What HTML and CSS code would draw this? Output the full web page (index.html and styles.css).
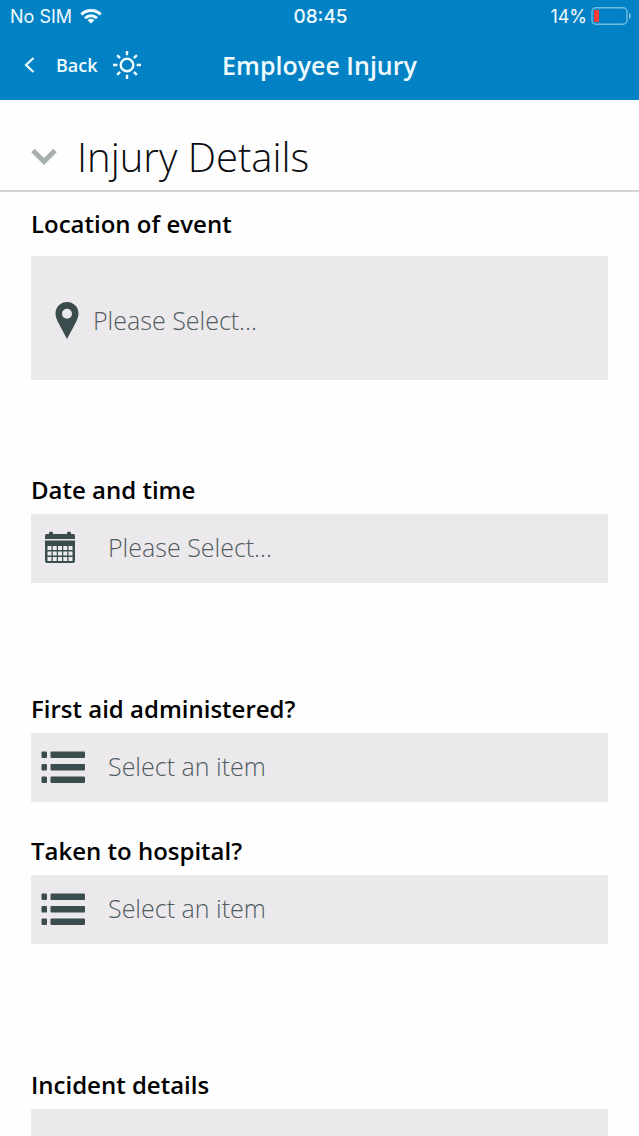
FILE: index.html
```html
<!DOCTYPE html>
<html lang="en">
<head>
<meta charset="utf-8">
<meta name="viewport" content="width=device-width, initial-scale=1">
<title>Employee Injury</title>
<link rel="stylesheet" href="styles.css">
</head>
<body>
<div class="page">
  <header class="top">
    <div class="status">
      <div class="status-left">
        <span>No SIM</span>
        <svg class="wifi" width="22" height="16" viewBox="0 0 22 16" fill="none" stroke="currentColor" stroke-width="3" aria-hidden="true">
          <path d="M1.3 6.4a13.8 13.8 0 0 1 19.4 0"/>
          <path d="M5 10.2a8.5 8.5 0 0 1 12 0"/>
          <path d="M11 15.4 7.6 12.2a4.8 4.8 0 0 1 6.8 0z" fill="currentColor" stroke="none"/>
        </svg>
      </div>
      <time class="clock">08:45</time>
      <div class="status-right">
        <span>14%</span>
        <svg width="40" height="18" viewBox="0 0 40 18" aria-hidden="true">
          <rect x="1" y=".8" width="35" height="16.4" rx="4" fill="none" stroke="#6fbce3" stroke-width="1.4"/>
          <rect x="3" y="3" width="5" height="12" rx="1" fill="#fb3b34"/>
          <path d="M38 6c2.2 1 2.2 5 0 6z" fill="#8accec"/>
        </svg>
      </div>
    </div>
    <nav class="nav">
      <div class="nav-left">
        <button class="back" type="button">
          <svg width="12" height="18" viewBox="0 0 12 18" fill="none" stroke="currentColor" stroke-width="2.2" aria-hidden="true"><path d="M9.500 2 2 9l7.500 7"/></svg>
          <span>Back</span>
        </button>
        <button class="sun" type="button" aria-label="Brightness">
          <svg width="30" height="30" viewBox="0 0 30 30" fill="none" stroke="currentColor" stroke-width="2.4" aria-hidden="true">
            <circle cx="15" cy="15" r="6.3"/>
            <path d="M15 1v4.2M15 24.800v4.200M1 15h4.400M24.600 15H29M5.100 5.100l3 3M21.900 21.900l3 3M5.100 24.900l3-3M21.900 8.100l3-3"/>
          </svg>
        </button>
      </div>
      <h1 class="title">Employee Injury</h1>
    </nav>
  </header>

  <main class="content">
    <button class="section" type="button" aria-expanded="true">
      <svg width="26" height="18" viewBox="0 0 26 18" fill="none" stroke="#a7b0b0" stroke-width="5" aria-hidden="true"><path d="M2 2.500l11 11 11-11"/></svg>
      <span>Injury Details</span>
    </button>

    <form class="form">
      <div class="field field-location">
        <label class="label" for="location">Location of event</label>
        <button class="box box-tall" id="location" type="button">
          <svg width="24" height="38" viewBox="0 0 24 38" aria-hidden="true"><path fill="#3b4c4e" fill-rule="evenodd" d="M12 1a11.500 11.500 0 0 0-11.500 11.500c0 3 .9 5 2.200 7.900L12 38l9.300-17.600c1.300-2.900 2.200-4.900 2.200-7.900A11.500 11.500 0 0 0 12 1zm0 6.800a5 5 0 1 1 0 10 5 5 0 0 1 0-10z"/></svg>
          <span>Please Select...</span>
        </button>
      </div>

      <div class="field field-date">
        <label class="label" for="date">Date and time</label>
        <button class="box" id="date" type="button">
          <svg class="calendar" width="32" height="32" viewBox="0 0 32 32" aria-hidden="true">
            <path fill="#3b4c4e" d="M1 4.500Q1 3 2.500 3H5V2q0-1.500 2-1.500T9 2v1h14V2q0-1.500 2-1.500T27 2v1h2.500Q31 3 31 4.500V8H1zM1 9.500h30V30q0 2-2 2H3q-2 0-2-2z"/>
            <path fill="#ecebed" d="M3.500 15h4v4h-4zm5.250 0h4v4h-4zm5.250 0h4v4h-4zm5.250 0h4v4h-4zm5.250 0h4v4h-4zM3.500 20.500h4v4h-4zm5.250 0h4v4h-4zm5.250 0h4v4h-4zm5.250 0h4v4h-4zm5.250 0h4v4h-4zM3.500 26h4v4h-4zm5.250 0h4v4h-4zm5.250 0h4v4h-4zm5.250 0h4v4h-4zm5.250 0h4v4h-4z"/>
          </svg>
          <span>Please Select...</span>
        </button>
      </div>

      <div class="field field-aid">
        <label class="label" for="aid">First aid administered?</label>
        <div class="picker">
          <svg class="list" width="44" height="32" viewBox="0 0 44 32" fill="#3b4c4e" aria-hidden="true"><rect x=".5" y=".5" width="5.500" height="6.500" rx="1"/><rect x="9.500" y=".5" width="34.500" height="6.500" rx="1"/><rect x=".5" y="13" width="5.500" height="6.500" rx="1"/><rect x="9.500" y="13" width="34.500" height="6.500" rx="1"/><rect x=".5" y="25.500" width="5.500" height="6.500" rx="1"/><rect x="9.500" y="25.500" width="34.500" height="6.500" rx="1"/></svg>
          <select class="select" id="aid"><option>Select an item</option><option>Yes</option><option>No</option></select>
        </div>
      </div>

      <div class="field field-hospital">
        <label class="label" for="hospital">Taken to hospital?</label>
        <div class="picker">
          <svg class="list" width="44" height="32" viewBox="0 0 44 32" fill="#3b4c4e" aria-hidden="true"><rect x=".5" y=".5" width="5.500" height="6.500" rx="1"/><rect x="9.500" y=".5" width="34.500" height="6.500" rx="1"/><rect x=".5" y="13" width="5.500" height="6.500" rx="1"/><rect x="9.500" y="13" width="34.500" height="6.500" rx="1"/><rect x=".5" y="25.500" width="5.500" height="6.500" rx="1"/><rect x="9.500" y="25.500" width="34.500" height="6.500" rx="1"/></svg>
          <select class="select" id="hospital"><option>Select an item</option><option>Yes</option><option>No</option></select>
        </div>
      </div>

      <div class="field field-details">
        <label class="label" for="details">Incident details</label>
        <textarea class="details" id="details" rows="1"></textarea>
      </div>
    </form>
  </main>
</div>
</body>
</html>
```
FILE: styles.css
```css
* {
  box-sizing: border-box;
}

body {
  margin: 0;
  background: #fefefe;
  color: #0b0b10;
  font-family: "Open Sans", "Noto Sans", sans-serif;
}

button,
select,
textarea {
  margin: 0;
  border: 0;
  border-radius: 0;
  padding: 0;
  background: none;
  color: inherit;
  font: inherit;
  text-align: left;
}

svg {
  display: block;
  flex: none;
}

.page {
  display: flex;
  flex-direction: column;
  min-height: 100vh;
}

.top {
  background: #0282c4;
  color: #f0fbff;
  padding-bottom: 10px;
}

.status,
.nav {
  display: grid;
  grid-template-columns: 1fr auto 1fr;
  align-items: center;
}

.status {
  height: 32px;
  padding: 0 8px 0 10px;
  font-family: Inter, "Liberation Sans", sans-serif;
  font-size: 18px;
}

.status-left,
.status-right {
  display: flex;
  align-items: center;
  gap: 8px;
}

.status-right {
  justify-content: flex-end;
  gap: 4px;
}

.clock {
  font-size: 19px;
  font-weight: 500;
}

.nav {
  height: 58px;
  padding: 8px 24px 0;
}

.nav-left {
  display: flex;
  align-items: center;
  gap: 14px;
}

.back {
  display: flex;
  align-items: center;
  gap: 20px;
  font-size: 18px;
  font-weight: 600;
}

.title {
  margin: 0;
  font-size: 25px;
  line-height: 32px;
  font-weight: 600;
}

.content {
  display: flex;
  flex: 1;
  flex-direction: column;
}

.section {
  display: flex;
  align-items: center;
  gap: 20px;
  padding: 29px 31px 5px;
  border-bottom: 2px solid #d4d4d4;
  font-size: 40px;
  line-height: 56px;
  font-weight: 300;
}

.form {
  display: flex;
  flex: 1;
  flex-direction: column;
  padding: 16px 31px 0;
}

.field {
  display: flex;
  flex-direction: column;
  gap: 8px;
}

.field-location {
  gap: 16px;
  margin-bottom: 94px;
}

.field-date {
  margin-bottom: 110px;
}

.field-aid {
  margin-bottom: 33px;
}

.field-hospital {
  margin-bottom: 125px;
}

.field-details {
  flex: 1;
}

.label {
  color: #000;
  font-size: 24px;
  line-height: 32px;
  font-weight: 600;
}

.box,
.picker,
.details {
  background: #ebe9eb;
  color: #505c60;
  font-size: 25px;
  font-weight: 300;
}

.box {
  display: flex;
  align-items: center;
  min-height: 69px;
  padding: 0 13px 3px;
  gap: 32px;
}

.box-tall {
  min-height: 124px;
  padding: 4px 24px 0;
  gap: 14px;
}

.picker {
  display: grid;
  align-items: center;
}

.list,
.select {
  grid-area: 1 / 1;
}

.list {
  margin: 0 0 2px 10px;
  pointer-events: none;
}

.select {
  width: 100%;
  height: 69px;
  padding: 0 0 4px 77px;
  appearance: none;
}

.details {
  flex: 1;
  width: 100%;
  min-height: 27px;
  resize: none;
}
```
